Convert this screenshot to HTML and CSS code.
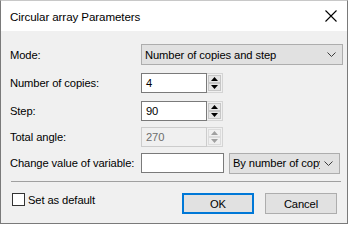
FILE: index.html
```html
<!DOCTYPE html>
<html>
<head>
<meta charset="utf-8">
<link rel="stylesheet" href="styles.css">
</head>
<body>
<div class="dialog">
  <div class="titlebar">
    <span class="title">Circular array Parameters</span>
    <svg class="close" width="12" height="12" viewBox="0 0 12 12"><path d="M0.5 0.5 L11.5 11.5 M11.5 0.5 L0.5 11.5" stroke="#000" stroke-width="1.1" fill="none"/></svg>
  </div>
  <div class="content">
    <div class="row r-mode">
      <label class="lbl">Mode:</label>
      <div class="combo combo-mode">
        <span class="combo-text">Number of copies and step</span>
        <svg class="chev" width="9" height="5" viewBox="0 0 9 5"><polyline points="0.5,0.5 4.5,4.5 8.5,0.5" stroke="#3c3c3c" stroke-width="1" fill="none"/></svg>
      </div>
    </div>
    <div class="row r-gap8">
      <label class="lbl">Number of copies:</label>
      <div class="spin">
        <div class="edit">4</div>
        <div class="updown">
          <div class="ud up"><svg width="7" height="4" viewBox="0 0 7 4"><polygon points="3.5,0 7,4 0,4" fill="#000"/></svg></div>
          <div class="ud down"><svg width="7" height="4" viewBox="0 0 7 4"><polygon points="0,0 7,0 3.5,4" fill="#000"/></svg></div>
        </div>
      </div>
    </div>
    <div class="row r-gap8">
      <label class="lbl">Step:</label>
      <div class="spin">
        <div class="edit">90</div>
        <div class="updown">
          <div class="ud up"><svg width="7" height="4" viewBox="0 0 7 4"><polygon points="3.5,0 7,4 0,4" fill="#000"/></svg></div>
          <div class="ud down"><svg width="7" height="4" viewBox="0 0 7 4"><polygon points="0,0 7,0 3.5,4" fill="#000"/></svg></div>
        </div>
      </div>
    </div>
    <div class="row r-gap6">
      <label class="lbl">Total angle:</label>
      <div class="spin disabled">
        <div class="edit">270</div>
        <div class="updown">
          <div class="ud up"><svg width="7" height="4" viewBox="0 0 7 4"><polygon points="3.5,0 7,4 0,4" fill="#a0a0a0"/></svg></div>
          <div class="ud down"><svg width="7" height="4" viewBox="0 0 7 4"><polygon points="0,0 7,0 3.5,4" fill="#a0a0a0"/></svg></div>
        </div>
      </div>
    </div>
    <div class="row r-gap6">
      <label class="lbl">Change value of variable:</label>
      <div class="edit edit-var"></div>
      <div class="combo combo-by">
        <span class="combo-text clip">By number of copy</span>
        <svg class="chev" width="9" height="5" viewBox="0 0 9 5"><polyline points="0.5,0.5 4.5,4.5 8.5,0.5" stroke="#3c3c3c" stroke-width="1" fill="none"/></svg>
      </div>
    </div>
    <div class="sep"></div>
    <div class="footer">
      <div class="check"><span class="box"></span><span>Set as default</span></div>
      <div class="buttons">
        <div class="btn btn-ok">OK</div>
        <div class="btn">Cancel</div>
      </div>
    </div>
  </div>
</div>
</body>
</html>
```

FILE: styles.css
```css
html, body {
  margin: 0;
  padding: 0;
  background: #ffffff;
}
body {
  font-family: "Liberation Sans", Arial, sans-serif;
  font-size: 11.2px;
  letter-spacing: -0.1px;
  color: #000;
}
.dialog {
  width: 346px;
  height: 222px;
  border: 1px solid #7a7a7a;
  border-top-color: #c8c8c8;
  background: #f0f0f0;
  display: flex;
  flex-direction: column;
}
.titlebar {
  height: 30px;
  background: #ffffff;
  display: flex;
  align-items: center;
  padding-left: 9px;
  padding-right: 9px;
}
.title {
  flex: 1;
  font-size: 11.6px;
  color: #000;
  padding-top: 1px;
}
.close {
  margin-right: 1px;
}
.content {
  padding: 13px 0 0 9px;
  display: flex;
  flex-direction: column;
}
.row {
  display: flex;
  align-items: center;
  height: 20px;
}
.r-mode { height: 21px; }
.r-gap8 { margin-top: 8px; }
.r-gap6 { margin-top: 6px; }
.lbl {
  width: 131px;
  flex: none;
  white-space: nowrap;
}
.combo {
  box-sizing: border-box;
  height: 21px;
  background: #e1e1e1;
  border: 1px solid #adadad;
  display: flex;
  align-items: center;
  padding-left: 3px;
  padding-right: 6px;
}
.combo-mode { width: 202px; }
.combo-by {
  width: 111px;
  margin-left: 5px;
}
.combo-text {
  flex: 1;
  white-space: nowrap;
  overflow: hidden;
}
.combo-text.clip {
  flex: none;
  width: 87px;
}
.combo-by .chev { margin-left: auto; }
.chev { flex: none; margin-left: 4px; }
.spin {
  display: flex;
  height: 20px;
}
.edit {
  box-sizing: border-box;
  height: 20px;
  width: 66px;
  background: #ffffff;
  border: 1px solid #7a7a7a;
  padding-left: 4px;
  line-height: 18px;
}
.updown {
  box-sizing: border-box;
  width: 16px;
  height: 20px;
  border: 1px solid #d4d4d4;
  border-left: none;
  background: #f0f0f0;
  display: flex;
  flex-direction: column;
  padding: 1px;
}
.ud {
  flex: 1;
  box-sizing: border-box;
  background: #e5e5e5;
  border: 1px solid #c6c6c6;
  display: flex;
  align-items: center;
  justify-content: center;
}
.ud svg { display: block; }
.disabled .edit {
  border-color: #cccccc;
  background: #f0f0f0;
  color: #6d6d6d;
}
.disabled .ud {
  background: #f0f0f0;
  border-color: #dcdcdc;
}
.edit-var {
  width: 83px;
}
.sep {
  margin-top: 8px;
  height: 1px;
  width: 330px;
  margin-left: 1px;
  background: #a0a0a0;
}
.footer {
  margin-top: 11px;
  display: flex;
  align-items: flex-start;
  padding-right: 10px;
}
.check {
  display: flex;
  align-items: center;
  margin-left: 2px;
  height: 13px;
}
.box {
  box-sizing: border-box;
  width: 13px;
  height: 13px;
  border: 1px solid #333333;
  background: #ffffff;
  margin-right: 3px;
}
.buttons {
  margin-left: auto;
  display: flex;
  gap: 11px;
}
.btn {
  box-sizing: border-box;
  width: 72px;
  height: 21px;
  background: #e1e1e1;
  border: 1px solid #adadad;
  display: flex;
  align-items: center;
  justify-content: center;
}
.btn-ok {
  border: 2px solid #0078d7;
}
```
